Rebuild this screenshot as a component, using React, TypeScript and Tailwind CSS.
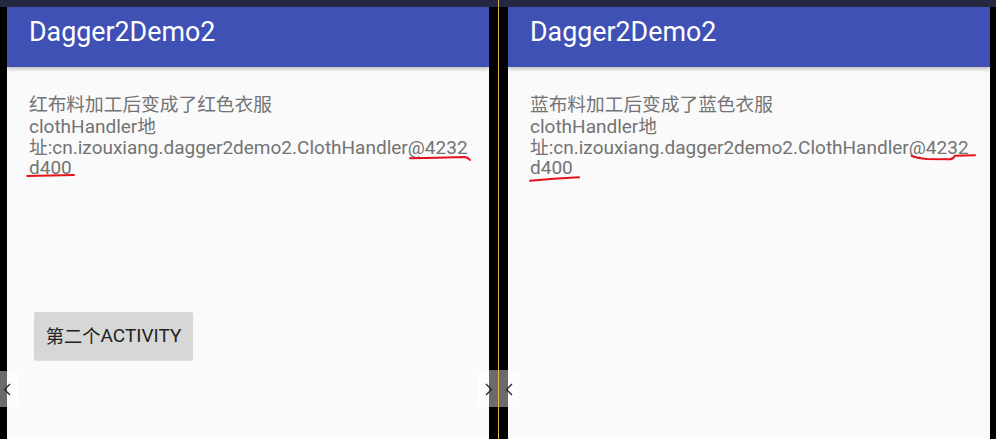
import React from "react";

const latin = "font-['Roboto','Noto_Sans_CJK_SC',sans-serif]";
const cjk = "font-['Noto_Sans_CJK_SC',sans-serif] text-[18.7px]";

function Line({ children }: { children: React.ReactNode }) {
  return <div className="h-[21.7px] leading-[21.7px] whitespace-nowrap">{children}</div>;
}

function Chevron({ dir }: { dir: "left" | "right" }) {
  return (
    <svg width="8" height="13" viewBox="0 0 8 13" className="block">
      <path
        d={dir === "left" ? "M7 1 L1.5 6.5 L7 12" : "M1 1 L6.5 6.5 L1 12"}
        fill="none"
        stroke="#222"
        strokeWidth="1.3"
      />
    </svg>
  );
}

function Phone({ cloth, button, marks }: { cloth: string; button?: boolean; marks: React.ReactNode }) {
  return (
    <div className="relative w-[482px] h-full bg-[#fafafa] flex flex-col">
      <div className="h-[60px] bg-[#3f51b5] shadow-[0_2px_4px_rgba(0,0,0,0.25)] flex items-center pl-[22px] pb-[10px] z-10">
        <span className={`${latin} text-[26.8px] text-white`}>Dagger2Demo2</span>
      </div>
      <div className={`${latin} text-[19px] text-[#737373] pt-[25px] pl-[22px]`}>
        <Line>
          <span className={cjk}>{cloth}</span>
        </Line>
        <Line>
          clothHandler<span className={cjk}>地</span>
        </Line>
        <Line>
          <span className={cjk}>址</span>:cn.izouxiang.dagger2demo2.ClothHandler@4232
        </Line>
        <Line>d400</Line>
      </div>
      {button && (
        <button className={`${latin} ml-[27px] mt-[133px] w-[159px] h-[48px] rounded-[2px] bg-[#d6d7d7] shadow-[0_1px_1px_rgba(0,0,0,0.12)] text-[19px] text-[#222] flex items-center justify-center`}>
          <span className="font-['Noto_Sans_CJK_SC',sans-serif] text-[18.3px]">第二个</span>ACTIVITY
        </button>
      )}
      <svg className="absolute inset-0 pointer-events-none z-20" width="482" height="432">
        {marks}
      </svg>
    </div>
  );
}

export default function App() {
  return (
    <div className="relative w-[996px] h-[439px] bg-black overflow-hidden flex flex-col">
      <div className="h-[7px] bg-[#252840]" />
      <div className="flex flex-1">
        <div className="w-[7px]" />
        <Phone
          cloth="红布料加工后变成了红色衣服"
          button
          marks={
            <g fill="none" stroke="#e3121b" strokeWidth="2" strokeLinecap="round">
              <path d="M403 151.3 Q430 150.8 458 150 Q461 150.5 463 153" />
              <path d="M20.3 169 Q45 168.5 67 168" />
            </g>
          }
        />
        <div className="relative w-[19px]">
          <div className="absolute top-[-7px] bottom-0 left-[9px] w-px bg-[#e2b54a]" />
        </div>
        <Phone
          cloth="蓝布料加工后变成了蓝色衣服"
          marks={
            <g fill="none" stroke="#e3121b" strokeWidth="2" strokeLinecap="round">
              <path d="M403.7 149 Q410 151.5 418.7 152 L442 152.3 Q445 152 447 148.7 L467 148.3" />
              <path d="M22 173.7 Q45 171.5 71 170.3" />
            </g>
          }
        />
        <div className="w-[6px]" />
      </div>
      {/* edge swipe tabs */}
      <div className="absolute left-0 top-[371px] h-[36px] flex">
        <div className="w-[7px] bg-[#6b6b6b]" />
        <div className="w-[11px] bg-[#fdfdfd]" />
        <div className="absolute left-[3px] top-[12px]">
          <Chevron dir="left" />
        </div>
      </div>
      <div className="absolute left-[478px] top-[370px] h-[37px] flex">
        <div className="w-[11px] bg-[#fdfdfd]" />
        <div className="relative w-[19px] bg-[#6b6b6b]">
          <div className="absolute top-0 bottom-0 left-[9px] w-px bg-[#e2b54a]" />
        </div>
        <div className="w-[11px] bg-[#fdfdfd]" />
        <div className="absolute left-[7px] top-[13px]">
          <Chevron dir="right" />
        </div>
        <div className="absolute left-[27px] top-[13px]">
          <Chevron dir="left" />
        </div>
      </div>
    </div>
  );
}
